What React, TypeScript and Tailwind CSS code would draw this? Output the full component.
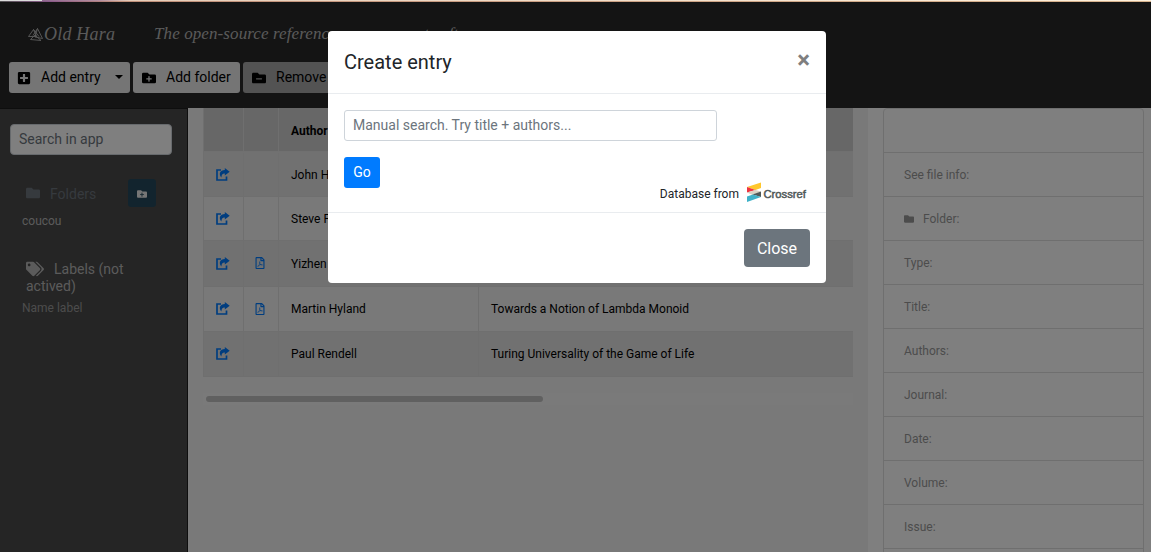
import React from "react";
import { FaPlusSquare, FaFolderPlus, FaFolderMinus, FaFolder, FaTags, FaRegFilePdf } from "react-icons/fa";

const entries = [
  { author: "John Horton Conway", title: "", pdf: false, row: "h-[45px] bg-[#e3e3e3] pt-px" },
  { author: "Steve Fuller", title: "", pdf: false, row: "h-[44px]" },
  { author: "Yizhen Chen", title: "", pdf: true, row: "h-[46px] bg-[#e3e3e3]" },
  { author: "Martin Hyland", title: "Towards a Notion of Lambda Monoid", pdf: true, row: "h-[45px]" },
  { author: "Paul Rendell", title: "Turing Universality of the Game of Life", pdf: false, row: "h-[45px] bg-[#e3e3e3]" },
];

const details = ["", "See file info:", "Folder:", "Type:", "Title:", "Authors:", "Journal:", "Date:", "Volume:", "Issue:", ""];

function LogoMark() {
  return (
    <svg width="16" height="15" viewBox="0 0 16 15" fill="none" stroke="currentColor" strokeWidth="0.9" className="shrink-0">
      <path d="M5.500 2.500 0.500 9.500h8zM9.500 1.500 14.500 11.500 7 10zM2.500 12.500l4.500-4.500 6 5.500zM9.500 1.500 5 8.500M5.500 2.500 11 9.500" />
    </svg>
  );
}

function ShareIcon() {
  return (
    <svg width="14" height="13" viewBox="0 0 14 13" className="mb-px shrink-0">
      <path d="M5 2H1v10h9.500V8.500" fill="none" stroke="currentColor" strokeWidth="1.7" />
      <path d="M8.800 0 13.700 3.700 8.800 7.400V5.400C6.500 5.300 5.600 6.400 5.400 9.600 2.300 6 4 2 8.800 2z" fill="currentColor" />
    </svg>
  );
}

function Header() {
  return (
    <header className="h-[108px] bg-[#292929]">
      <div className="h-px bg-[linear-gradient(90deg,#dcdcdc_0,#dcdcdc_42px,#8f678f_42px,#b58fa0_100px,#e5ccb8_130px,#fff1dc_100%)]" />
      <div className="h-px bg-[linear-gradient(90deg,#555_0,#8b5a8a_50px,#c0907a_120px,#d8b48f_100%)]" />
      <div className="flex h-[60px] items-center pl-[28px] pt-[4px] font-['Liberation_Serif',serif] italic text-[#b4b4b4]">
        <LogoMark />
        <span className="w-[110px] whitespace-nowrap text-[18px] tracking-[0.2px]">Old Hara</span>
        <span className="whitespace-nowrap text-[17px] tracking-[0.1px]">The open-source reference management software</span>
      </div>
      <div className="flex gap-[3px] pl-[9px] text-[14px] text-black">
        <button className="flex h-[31px] w-[121px] items-center rounded-[3px] bg-[#eaeaeb] pl-[8px]">
          <FaPlusSquare size={14} />
          <span className="ml-[10px] w-[74px] text-left">Add entry</span>
          <span className="mb-[2px] border-x-4 border-t-4 border-x-transparent border-t-black" />
        </button>
        <button className="flex h-[31px] w-[107px] items-center rounded-[3px] bg-[#eaeaeb] pl-[9px]">
          <FaFolderPlus size={14} />
          <span className="ml-[10px] whitespace-nowrap">Add folder</span>
        </button>
        <button className="flex h-[31px] w-[132px] items-center rounded-[3px] bg-[#a6a6a7] pl-[9px]">
          <FaFolderMinus size={14} />
          <span className="ml-[10px]">Remove</span>
        </button>
      </div>
    </header>
  );
}

function Sidebar() {
  return (
    <aside className="w-[188px] shrink-0 border-r border-t border-[#1c1c1c] bg-[#4a4a4a] text-[#b7b7b7]">
      <input className="ml-[10px] mt-[15px] block h-[31px] w-[162px] rounded-[4px] border border-[#ced4da] bg-white px-2 pb-px text-[14px] placeholder:text-[#6c757d]" placeholder="Search in app" />
      <div className="mt-[24px] flex h-[28px] items-center pl-[26px] text-[#6c747d]">
        <FaFolder size={14} />
        <span className="ml-[10px] w-[78px] pt-[2px] text-[14px]">Folders</span>
        <button className="flex size-7 items-center justify-center rounded-[3px] bg-[#25495c] text-[#ececec]">
          <FaFolderPlus size={10} className="mt-[2px]" />
        </button>
      </div>
      <div className="mt-[5px] pl-[22px] text-[12px] leading-[18px]">coucou</div>
      <div className="mt-[30px] w-[130px] pl-[26px] text-[14px] leading-[17px]">
        <FaTags size={18} className="inline-block align-[-4px]" />
        <span className="ml-[10px] whitespace-nowrap">Labels (not</span> actived)
      </div>
      <div className="mt-[4px] pl-[22px] text-[12px] leading-[18px] text-[#999]">Name label</div>
    </aside>
  );
}

function Library() {
  return (
    <main className="w-[680px] shrink-0 bg-[#f2f2f2] pl-[15px]">
      <div className="w-[650px] overflow-hidden border-l border-[#dedede] text-[12px] text-black">
        <div className="flex h-[44px] items-stretch border-b border-[#e0e0e0] bg-[#cfcfcf] font-bold">
          <div className="w-[40px] border-r border-[#dedede]" />
          <div className="w-[35px] border-r border-[#dedede]" />
          <div className="flex w-[200px] items-center border-r border-[#dedede] pl-3 pt-[2px]">Author</div>
          <div className="flex-1" />
        </div>
        {entries.map((e) => (
          <div key={e.author} className={"flex items-stretch border-b border-[#dedede] " + e.row}>
            <div className="flex w-[40px] items-center border-r border-[#dedede] pl-3 text-[#007bff]"><ShareIcon /></div>
            <div className="flex w-[35px] items-center border-r border-[#dedede] pl-[10px] pb-px text-[#007bff]">{e.pdf && <FaRegFilePdf size={12} />}</div>
            <div className="flex w-[200px] items-center border-r border-[#dedede] pl-3">{e.author}</div>
            <div className="flex items-center whitespace-nowrap pl-3">{e.title}</div>
          </div>
        ))}
      </div>
      <div className="mt-[16px] flex h-[12px] w-[650px] items-center bg-[#f5f5f5] pl-[3px]">
        <div className="h-[6px] w-[337px] rounded-full bg-[#c1c1c1]" />
      </div>
    </main>
  );
}

function Details() {
  return (
    <section className="flex-1 bg-white pl-[15px]">
      <ul className="w-[261px] rounded-t-[4px] border border-[#dfdfdf] text-[12px] text-[#999]">
        {details.map((d, i) => (
          <li key={i} className="flex h-[44px] items-center border-b border-[#dfdfdf] pl-5">
            {d === "Folder:" && <FaFolder size={10} className="mr-[9px]" />}
            {d}
          </li>
        ))}
      </ul>
    </section>
  );
}

function CrossrefLogo() {
  return (
    <svg width="60" height="22" viewBox="0 0 60 22">
      <path d="M0 5 14 0.500v5.500L8.500 8z" fill="#ffc72c" />
      <path d="M0 5l8.500 3L0 10.500z" fill="#ef3340" />
      <path d="M0 10.500 8.500 8l5.500 1.500-8.500 3.500z" fill="#d8d2c4" />
      <path d="M5.500 12.500 14 9.500v5.500z" fill="#4f5858" />
      <path d="M0 14.500l6-2 8 2.500L0 20z" fill="#3eb1c8" />
      <text x="16.500" y="15.800" fill="#4f5858" stroke="#4f5858" strokeWidth="0.450" fontFamily="Liberation Sans" fontSize="10.600" textLength="42.500" lengthAdjust="spacingAndGlyphs">Crossref</text>
    </svg>
  );
}

function CreateEntryModal() {
  return (
    <div className="absolute inset-x-0 top-[2px] h-[550px] bg-black/50">
      <div className="ml-[328px] mt-[29px] h-[252px] w-[498px] rounded-[4px] bg-white text-[#212529]">
        <div className="flex h-[63px] items-center justify-between border-b border-[#e9ecef] pl-4 pr-[16px]">
          <h5 className="text-[20px]">Create entry</h5>
          <span className="pb-[5px] text-[24px] font-bold leading-none text-[#7f7f7f]">×</span>
        </div>
        <div className="h-[119px] border-b border-[#e9ecef] px-4 pt-4">
          <input className="block h-[31px] w-[373px] rounded-[3px] border border-[#ced4da] px-2 pb-[2px] text-[14px] placeholder:text-[#6c757d]" placeholder="Manual search. Try title + authors..." />
          <button className="mt-4 block h-[31px] w-9 rounded-[3px] bg-[#007bff] text-[14px] text-white">Go</button>
          <div className="-mt-[6px] ml-auto mr-[3px] flex w-fit items-center gap-2 text-[12px]">
            <span className="pt-[2px]">Database from</span>
            <CrossrefLogo />
          </div>
        </div>
        <div className="flex justify-end p-4">
          <button className="h-[38px] w-[66px] rounded-[4px] bg-[#6c757d] pt-[2px] text-[16px] text-white">Close</button>
        </div>
      </div>
    </div>
  );
}

export default function App() {
  return (
    <div className="relative flex h-[552px] w-[1151px] flex-col overflow-hidden font-['Roboto',sans-serif]">
      <Header />
      <div className="flex h-[444px] overflow-hidden">
        <Sidebar />
        <Library />
        <Details />
      </div>
      <CreateEntryModal />
    </div>
  );
}
